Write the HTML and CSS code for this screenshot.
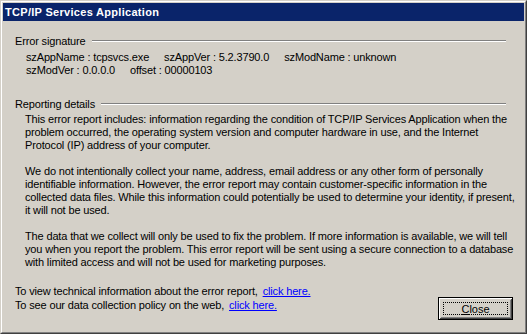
FILE: index.html
```html
<!DOCTYPE html>
<html lang="en">

<head>
  <meta charset="UTF-8">
  <title>TCP/IP Services Application</title>
  <link rel="stylesheet" href="styles.css">
</head>

<body>
  <div class="window">
    <div class="frame">
      <div class="titlebar">TCP/IP Services Application</div>

      <div class="content">
        <!-- Error signature -->
        <div class="group-head">
          <span>Error signature</span>
          <span class="group-line"></span>
        </div>
        <div class="sig-row">
          <span>szAppName : tcpsvcs.exe</span>
          <span>szAppVer : 5.2.3790.0</span>
          <span>szModName : unknown</span>
        </div>
        <div class="sig-row">
          <span>szModVer : 0.0.0.0</span>
          <span>offset : 00000103</span>
        </div>

        <!-- Reporting details -->
        <div class="group-head second">
          <span>Reporting details</span>
          <span class="group-line"></span>
        </div>
        <div class="report-text">
          <p>This error report includes: information regarding the condition of TCP/IP Services Application when the<br>
            problem occurred, the operating system version and computer hardware in use, and the Internet<br>
            Protocol (IP) address of your computer.</p>
          <p>We do not intentionally collect your name, address, email address or any other form of personally<br>
            identifiable information. However, the error report may contain customer-specific information in the<br>
            collected data files. While this information could potentially be used to determine your identity, if present,<br>
            it will not be used.</p>
          <p>The data that we collect will only be used to fix the problem. If more information is available, we will tell<br>
            you when you report the problem. This error report will be sent using a secure connection to a database<br>
            with limited access and will not be used for marketing purposes.</p>
        </div>

        <div class="footer">
          <div class="links">
            <div>To view technical information about the error report, <a href="#">click here.</a></div>
            <div>To see our data collection policy on the web, <a href="#">click here.</a></div>
          </div>
          <button class="close-btn"><u>C</u>lose</button>
        </div>
      </div>
    </div>
  </div>
</body>

</html>
```

FILE: styles.css
```css
* {
  margin: 0;
  padding: 0;
  box-sizing: border-box;
}

body {
  font-family: 'Liberation Sans', Arial, sans-serif;
  font-size: 11px;
  line-height: 13px;
  letter-spacing: -0.15px;
  color: #000;
  background: #d4d0c8;
}

.window {
  width: 527px;
  height: 334px;
  border: 1px solid;
  border-color: #d4d0c8 #404040 #404040 #d4d0c8;
}

.frame {
  height: 100%;
  border: 1px solid;
  border-color: #fff #808080 #808080 #fff;
  padding: 1px;
  background: #d4d0c8;
}

.titlebar {
  height: 18px;
  background-color: #0a246a;
  color: #fff;
  font-weight: bold;
  font-size: 11px;
  line-height: 18px;
  letter-spacing: 0.3px;
  padding-left: 2px;
  white-space: nowrap;
}

.content {
  padding: 14px 11px 0 12px;
}

.group-head {
  display: flex;
  margin-right: 7px;
  margin-bottom: 3px;
}

.group-head.second {
  margin-top: 21px;
  margin-bottom: 2px;
}

.group-line {
  flex: 1;
  height: 2px;
  margin-top: 5px;
  margin-left: 6px;
  border-top: 1px solid #808080;
  border-bottom: 1px solid #fff;
}

.sig-row {
  display: flex;
  gap: 15px;
  margin-left: 11px;
  white-space: nowrap;
}

.report-text {
  margin-left: 10px;
  white-space: nowrap;
}

.report-text p + p {
  margin-top: 13px;
}

.footer {
  display: flex;
  justify-content: space-between;
  align-items: flex-start;
  margin-top: 15px;
}

.links {
  line-height: 14px;
  white-space: nowrap;
}

.links a {
  color: #0000ff;
  margin-left: 2px;
}

.close-btn {
  position: relative;
  width: 75px;
  height: 23px;
  margin-top: 13px;
  font-family: 'Liberation Sans', Arial, sans-serif;
  font-size: 11px;
  color: #000;
  background: #d4d0c8;
  border: 1px solid #000;
  box-shadow: inset 1px 1px #fff, inset -1px -1px #404040, inset 2px 2px #d4d0c8, inset -2px -2px #808080;
}

.close-btn::after {
  content: "";
  position: absolute;
  top: 4px;
  left: 4px;
  right: 4px;
  bottom: 4px;
  border: 1px dotted #000;
}
```
